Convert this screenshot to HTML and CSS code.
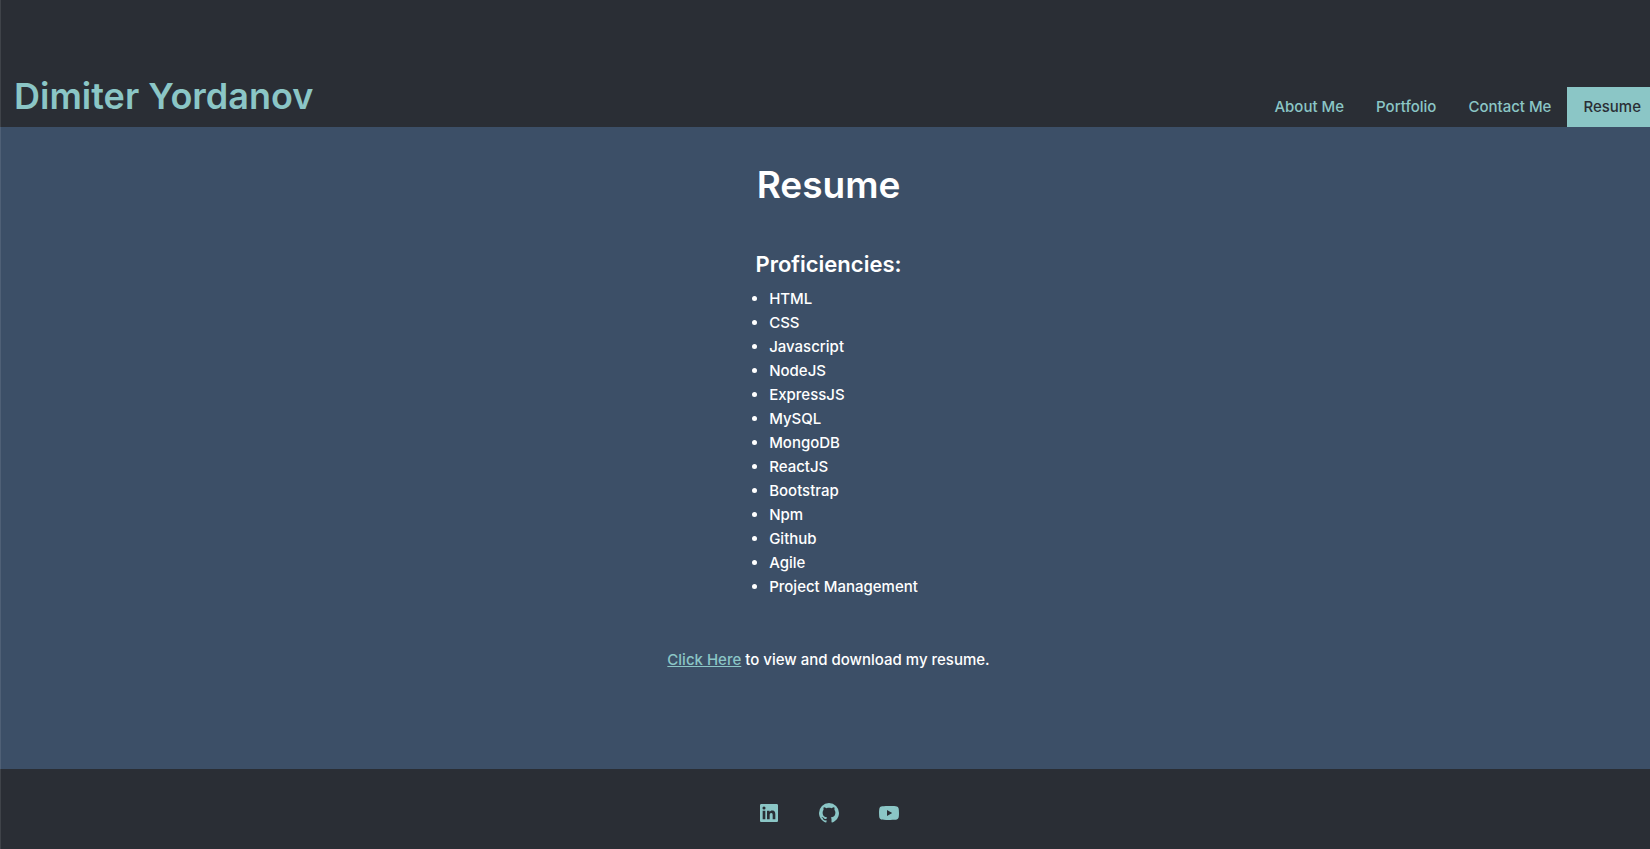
FILE: index.html
```html
<!DOCTYPE html>
<html lang="en">
<head>
<meta charset="utf-8">
<title>Dimiter Yordanov</title>
<link rel="stylesheet" href="styles.css">
</head>
<body>
<header class="header">
  <h1 class="brand">Dimiter Yordanov</h1>
  <nav class="nav">
    <a class="nav-link" href="#about">About Me</a>
    <a class="nav-link" href="#portfolio">Portfolio</a>
    <a class="nav-link" href="#contact">Contact Me</a>
    <a class="nav-link active" href="#resume">Resume</a>
  </nav>
</header>
<main class="main">
  <h2 class="title">Resume</h2>
  <h3 class="subtitle">Proficiencies:</h3>
  <ul class="skills">
    <li>HTML</li>
    <li>CSS</li>
    <li>Javascript</li>
    <li>NodeJS</li>
    <li>ExpressJS</li>
    <li>MySQL</li>
    <li>MongoDB</li>
    <li>ReactJS</li>
    <li>Bootstrap</li>
    <li>Npm</li>
    <li>Github</li>
    <li>Agile</li>
    <li>Project Management</li>
  </ul>
  <p class="download"><a class="download-link" href="#download">Click Here</a> to view and download my resume.</p>
</main>
<footer class="footer">
  <a class="social" href="#linkedin" aria-label="LinkedIn"><svg viewBox="0 0 24 24"><path d="M18.335 18.339H15.670v-4.177c0-.996-.02-2.278-1.390-2.278-1.389 0-1.601 1.084-1.601 2.205v4.250h-2.666V9.750h2.560v1.170h.035c.358-.674 1.228-1.387 2.528-1.387 2.700 0 3.200 1.778 3.200 4.091v4.715zM7.003 8.575a1.546 1.546 0 0 1-1.548-1.549 1.548 1.548 0 1 1 1.547 1.549zm1.336 9.764H5.666V9.750H8.340v8.589zM19.670 3H4.329C3.593 3 3 3.580 3 4.297v15.406C3 20.420 3.594 21 4.328 21h15.338C20.400 21 21 20.420 21 19.703V4.297C21 3.580 20.400 3 19.666 3h.003z"/></svg></a>
  <a class="social" href="#github" aria-label="GitHub"><svg viewBox="0 0 24 24"><path d="M12 2A10 10 0 0 0 2 12c0 4.420 2.870 8.170 6.840 9.500.5.080.66-.23.66-.5v-1.690c-2.770.6-3.360-1.340-3.360-1.340-.46-1.160-1.110-1.470-1.110-1.470-.91-.62.070-.6.070-.6 1 .07 1.530 1.030 1.530 1.030.87 1.520 2.340 1.070 2.910.83.090-.65.350-1.090.63-1.340-2.220-.25-4.550-1.110-4.550-4.920 0-1.110.38-2 1.030-2.710-.1-.25-.45-1.290.1-2.640 0 0 .84-.27 2.750 1.020.79-.22 1.650-.33 2.500-.33s1.710.11 2.500.33c1.910-1.290 2.750-1.020 2.750-1.020.55 1.350.2 2.390.1 2.640.65.710 1.030 1.600 1.030 2.710 0 3.820-2.340 4.660-4.570 4.910.36.310.69.920.69 1.850V21c0 .27.16.59.67.5C19.140 20.160 22 16.420 22 12A10 10 0 0 0 12 2z"/></svg></a>
  <a class="social" href="#youtube" aria-label="YouTube"><svg viewBox="0 0 24 24"><path d="M10 15l5.190-3L10 9v6m11.560-7.830c.13.470.22 1.100.28 1.900.07.800.1 1.490.1 2.090L22 12c0 2.190-.16 3.800-.44 4.830-.25.900-.83 1.480-1.730 1.730-.47.130-1.330.22-2.650.28-1.300.070-2.490.1-3.590.1L12 19c-4.190 0-6.800-.16-7.830-.44-.9-.25-1.480-.83-1.730-1.730-.13-.47-.22-1.100-.28-1.900-.07-.8-.1-1.490-.1-2.090L2 12c0-2.190.16-3.800.44-4.830.25-.9.830-1.480 1.730-1.730.47-.13 1.330-.22 2.650-.28 1.300-.07 2.490-.1 3.590-.1L12 5c4.190 0 6.800.16 7.830.44.900.25 1.480.83 1.730 1.730z"/></svg></a>
</footer>
</body>
</html>
```
FILE: styles.css
```css
* {
  box-sizing: border-box;
}

body {
  position: relative;
  margin: 0;
  min-height: 100vh;
  display: flex;
  flex-direction: column;
  background: #2a2e35;
  color: #fff;
  font: 500 15px/24px Inter, "Liberation Sans", sans-serif;
}

body::before {
  content: "";
  position: absolute;
  inset: 0 auto 0 0;
  width: 1px;
  background: rgba(255, 255, 255, 0.1);
}

.header {
  display: flex;
  justify-content: space-between;
  align-items: flex-end;
  padding: 72px 0 0 14px;
}

.brand {
  margin: 0 0 7px;
  color: #8bc6c6;
  font-size: 36px;
  line-height: 48px;
  font-weight: 600;
}

.nav {
  display: flex;
}

.nav-link {
  padding: 8px 16px;
  color: #8bc6c6;
  text-decoration: none;
}

.nav-link.active {
  padding-right: 9px;
  background: #8bc6c6;
  color: #2a2e35;
}

.main {
  flex: 1;
  display: flex;
  flex-direction: column;
  align-items: center;
  padding: 34px 0 0 7px;
  background: #3c4f67;
}

.title {
  margin: 0;
  font-size: 37px;
  line-height: 48px;
  font-weight: 600;
}

.subtitle {
  margin: 40px 0 8px;
  font-size: 22px;
  line-height: 30px;
  font-weight: 600;
}

.skills {
  margin: 0;
  padding-left: 30px;
}

.download {
  margin: 49px 0 0;
}

.download-link {
  color: #8bc6c6;
}

.footer {
  display: flex;
  justify-content: center;
  gap: 36px;
  padding: 32px 0 24px 7px;
  background: #2a2e35;
}

.social {
  display: block;
  width: 24px;
  height: 24px;
}

.social svg {
  display: block;
  width: 100%;
  height: 100%;
  fill: #8bc6c6;
}
```
